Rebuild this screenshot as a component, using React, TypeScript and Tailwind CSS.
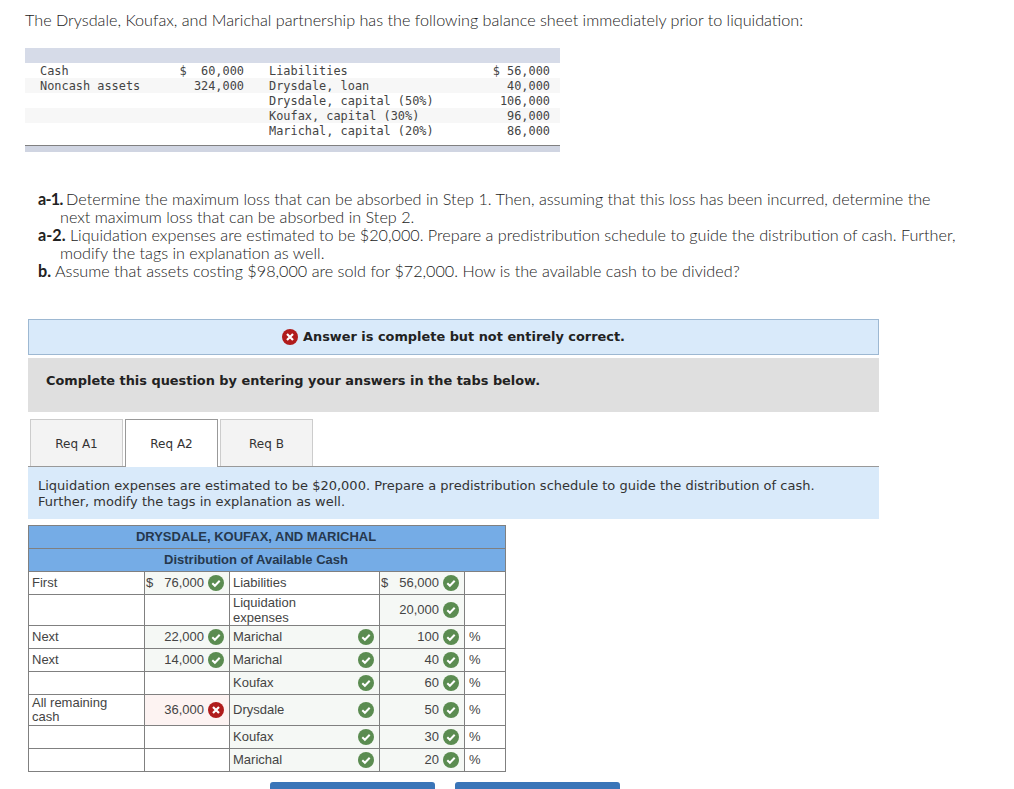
const balanceRows = [
  { left: "Cash", amount: "$  60,000", right: "Liabilities", value: "$ 56,000", shade: false },
  { left: "Noncash assets", amount: "324,000", right: "Drysdale, loan", value: "40,000", shade: true },
  { left: "", amount: "", right: "Drysdale, capital (50%)", value: "106,000", shade: false },
  { left: "", amount: "", right: "Koufax, capital (30%)", value: "96,000", shade: true },
  { left: "", amount: "", right: "Marichal, capital (20%)", value: "86,000", shade: false },
]

type Row = {
  label: string
  dollars?: string
  amount?: string
  amountBad?: boolean
  name: string
  nameCheck?: boolean
  dollars2?: string
  value: string
  pct?: boolean
  tall?: boolean
}

const rows: Row[] = [
  { label: "First", dollars: "$", amount: "76,000", name: "Liabilities", dollars2: "$", value: "56,000" },
  { label: "", name: "Liquidation expenses", value: "20,000", tall: true },
  { label: "Next", amount: "22,000", name: "Marichal", nameCheck: true, value: "100", pct: true },
  { label: "Next", amount: "14,000", name: "Marichal", nameCheck: true, value: "40", pct: true },
  { label: "", name: "Koufax", nameCheck: true, value: "60", pct: true },
  { label: "All remaining cash", amount: "36,000", amountBad: true, name: "Drysdale", nameCheck: true, value: "50", pct: true, tall: true },
  { label: "", name: "Koufax", nameCheck: true, value: "30", pct: true },
  { label: "", name: "Marichal", nameCheck: true, value: "20", pct: true },
]

function Check() {
  return (
    <svg width="16" height="16" viewBox="0 0 16 16" className="shrink-0">
      <circle cx="8" cy="8" r="8" fill="#5b8c51" />
      <path d="M4.3 8.2l2.6 2.6 4.8-5" fill="none" stroke="#fff" strokeWidth="2" />
    </svg>
  )
}

function Cross({ size = 16 }: { size?: number }) {
  return (
    <svg width={size} height={size} viewBox="0 0 16 16" className="shrink-0">
      <circle cx="8" cy="8" r="8" fill="#b01c1c" />
      <path d="M5 5l6 6M11 5l-6 6" fill="none" stroke="#fff" strokeWidth="2.2" />
    </svg>
  )
}

export default function App() {
  return (
    <div className="h-[789px] overflow-hidden bg-white text-[#333] font-['Lato',sans-serif]">
      <p className="pl-[25px] pt-[11px] text-[16.2px] font-light leading-[18px] text-[#222]">
        The Drysdale, Koufax, and Marichal partnership has the following balance sheet immediately prior to liquidation:
      </p>

      <div className="ml-[25px] mt-[19px] w-[535px] font-['DejaVu_Sans_Mono',monospace] text-[11.9px] leading-[15px] text-[#444]">
        <div className="h-[15px] bg-[#d6dbe8]" />
        {balanceRows.map((r) => (
          <div key={r.right} className={`flex h-[15px] whitespace-pre pt-px ${r.shade ? "bg-[#f7f7f7]" : ""}`}>
            <span className="w-[140px] pl-[15px]">{r.left}</span>
            <span className="w-[79px] text-right">{r.amount}</span>
            <span className="ml-[25px] w-[180px]">{r.right}</span>
            <span className="w-[101px] text-right">{r.value}</span>
          </div>
        ))}
        <div className="mt-[7px] h-[7px] border-t border-[#808080] bg-[#d0d5e2]" />
      </div>

      <div className="mt-[38px] text-[16.2px] font-light leading-[18px] text-[#222]">
        <p className="ml-[38px] w-[925px] pl-[22px] -indent-[22px]">
          <b className="mr-[-1px] font-bold tracking-[-0.7px]">a-1.</b> Determine the maximum loss that can be absorbed in Step 1. Then, assuming that this loss has been incurred, determine the next maximum loss that can be absorbed in Step 2.
        </p>
        <p className="ml-[38px] w-[925px] pl-[22px] -indent-[22px]">
          <b className="font-bold">a-2.</b> Liquidation expenses are estimated to be $20,000. Prepare a predistribution schedule to guide the distribution of cash. Further, modify the tags in explanation as well.
        </p>
        <p className="ml-[38px]">
          <b className="font-bold">b.</b> Assume that assets costing $98,000 are sold for $72,000. How is the available cash to be divided?
        </p>
      </div>

      <div className="ml-[28px] w-[851px] font-['DejaVu_Sans',sans-serif]">
        <div className="mt-[39px] flex h-[36px] items-center justify-center gap-[5px] border border-[#9db8d2] bg-[#d9eafa] text-[12.9px] font-bold text-[#222]">
          <Cross />
          <span>Answer is complete but not entirely correct.</span>
        </div>
        <div className="mt-[3px] h-[54px] bg-[#dfdfdf] pl-[18px] pt-[14px] text-[12.9px] font-bold leading-[18px] text-[#222]">
          Complete this question by entering your answers in the tabs below.
        </div>

        <div className="mt-[7px] flex h-[48px] gap-[2px] border-b border-[#999] pl-[2px] text-[12px] text-[#333]">
          <div className="flex h-[47px] w-[93px] items-center justify-center border border-b-0 border-[#ccc] bg-[#f3f3f3] pt-px">Req A1</div>
          <div className="flex h-[48px] w-[93px] items-center justify-center border border-b-0 border-[#999] bg-white">Req A2</div>
          <div className="flex h-[47px] w-[93px] items-center justify-center border border-b-0 border-[#ccc] bg-[#f3f3f3] pt-px">Req B</div>
        </div>
        <div className="h-[52px] bg-[#d9eafa] pl-[10px] pt-[11px] text-[13px] leading-[16px] text-[#333]">
          Liquidation expenses are estimated to be $20,000. Prepare a predistribution schedule to guide the distribution of cash.
          <br />
          Further, modify the tags in explanation as well.
        </div>
      </div>

      <table className="ml-[28px] mt-[6px] w-[477px] table-fixed border-collapse border border-[#808080] font-['Liberation_Sans',sans-serif] text-[13px] leading-[15px] text-[#444]">
        <colgroup>
          <col className="w-[116px]" />
          <col className="w-[85px]" />
          <col className="w-[150px]" />
          <col className="w-[85px]" />
          <col className="w-[41px]" />
        </colgroup>
        <thead>
          <tr className="h-[23px] bg-[#75ace6] text-[#26384d]">
            <th colSpan={5} className="border border-[#808080] pb-[2px] pr-[22px] text-center text-[13px] font-bold">
              DRYSDALE, KOUFAX, AND MARICHAL
            </th>
          </tr>
          <tr className="h-[23px] bg-[#75ace6] text-[#26384d]">
            <th colSpan={5} className="border border-[#808080] pb-[2px] pr-[22px] text-center text-[13px] font-bold">
              Distribution of Available Cash
            </th>
          </tr>
        </thead>
        <tbody>
          {rows.map((r, i) => (
            <tr key={i} className={r.tall ? "h-[31px]" : "h-[23px]"}>
              <td className="border border-[#808080] px-[3px]">
                <div className="w-[90px] leading-[14px]">{r.label}</div>
              </td>
              <td className={`border border-[#808080] px-[5px] pl-[1px] ${r.amountBad ? "bg-[#fdf3f2]" : r.amount ? "bg-[#f5f8f5]" : ""}`}>
                {r.amount && (
                  <div className="flex items-center justify-end">
                    {r.dollars && <span className="mr-auto -translate-y-px">{r.dollars}</span>}
                    <span className="mr-[4px] -translate-y-px">{r.amount}</span>
                    {r.amountBad ? <Cross /> : <Check />}
                  </div>
                )}
              </td>
              <td className={`border border-[#808080] pl-[3px] pr-[5px] ${r.nameCheck ? "bg-[#f5f8f5]" : ""}`}>
                <div className="flex items-center justify-between">
                  {r.tall && !r.nameCheck ? (
                    <span className="w-[80px]">{r.name}</span>
                  ) : (
                    <span className="-translate-y-px">{r.name}</span>
                  )}
                  {r.nameCheck && <Check />}
                </div>
              </td>
              <td className="border border-[#808080] bg-[#f5f8f5] px-[5px] pl-[1px]">
                <div className="flex items-center justify-end">
                  {r.dollars2 && <span className="mr-auto -translate-y-px">{r.dollars2}</span>}
                  <span className="mr-[4px] -translate-y-px">{r.value}</span>
                  <Check />
                </div>
              </td>
              <td className="border border-[#808080] pl-[4px]">
                <div className="-translate-y-px">{r.pct ? "%" : ""}</div>
              </td>
            </tr>
          ))}
        </tbody>
      </table>

      <div className="ml-[270px] mt-[10px] flex gap-[20px]">
        <div className="h-[40px] w-[165px] rounded-[3px] bg-[#3a75b8]" />
        <div className="h-[40px] w-[165px] rounded-[3px] bg-[#3a75b8]" />
      </div>
    </div>
  )
}
